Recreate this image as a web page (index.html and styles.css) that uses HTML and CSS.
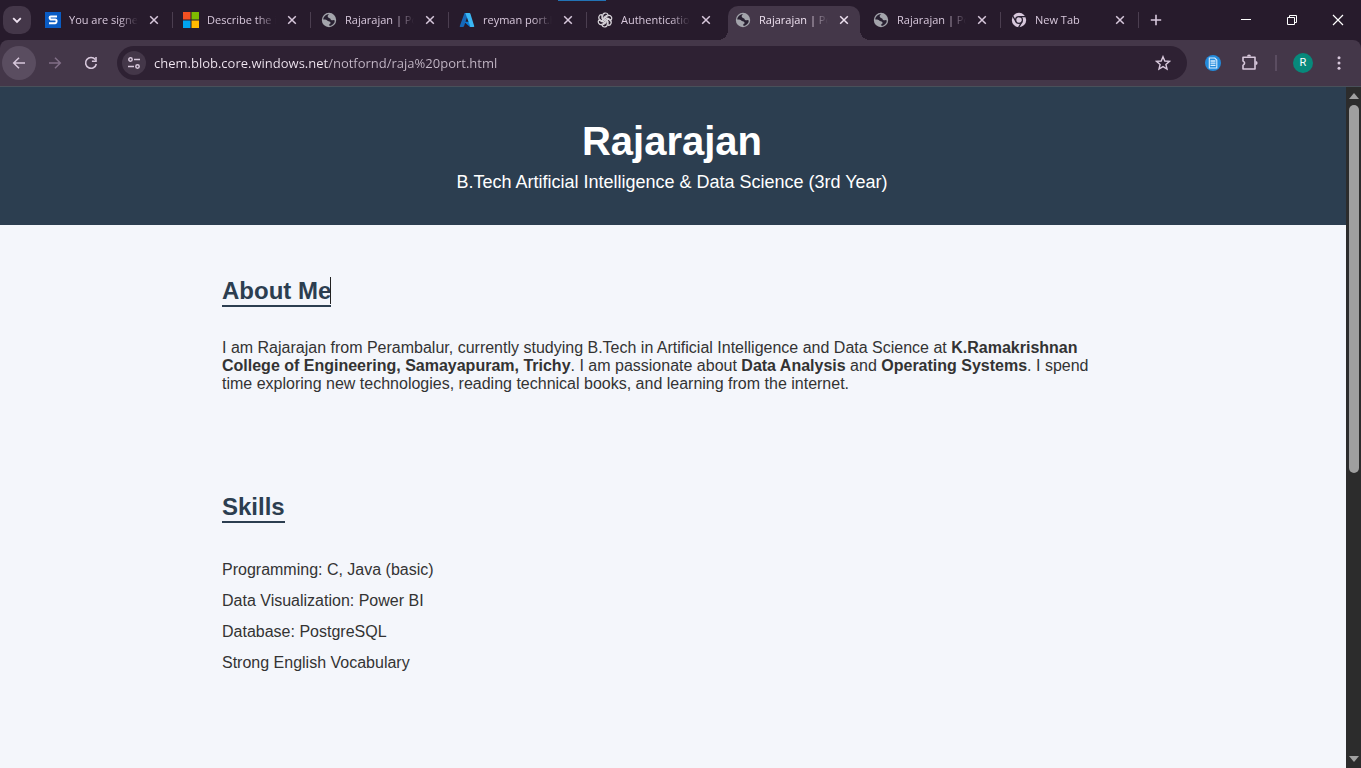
FILE: index.html
```html
<!DOCTYPE html>
<html lang="en">
<head>
<meta charset="utf-8">
<title>Rajarajan | Portfolio</title>
<link rel="stylesheet" href="styles.css">
</head>
<body>
<svg class="defs" aria-hidden="true">
  <symbol id="close" viewBox="0 0 16 16"><path d="M4.200 4.200l7.600 7.600M11.800 4.200l-7.600 7.600" fill="none" stroke="currentColor" stroke-width="1.500"/></symbol>
  <symbol id="globe" viewBox="0 0 16 16"><circle cx="8" cy="8" r="7.200" fill="#a3a4ab"/><path d="M8.300 2.300C7 3 6.200 4 7 5.200c.7 1 2.400.8 2.600 2 .2 1.400 2.200 1.200 3.200.8 1.300-.5 1.200 2.200-.3 3.800-1 1.200-2.400 2-4 2.100l-.2-2c1.400.1 1.600-1 .9-1.900-.8-1-2.200-.8-3-1.600C5.400 7.600 4 7.500 2.300 7.600 2.400 4.800 4.800 2 8.300 2.300z" fill="#282031"/><path d="M9.500 2.500l3.300 2.300-.6 1.900-1.800-.5-.7-1.700z" fill="#a3a4ab"/></symbol>
</svg>
<div class="browser">
  <header class="strip">
    <button class="search" aria-label="Search tabs"><svg width="16" height="16" viewBox="0 0 16 16"><path d="M4.200 6.200L8 10l3.800-3.800" fill="none" stroke="currentColor" stroke-width="1.800"/></svg></button>
    <nav class="tabs" aria-label="Tabs">
      <div class="tab"><button class="label"><svg class="fav" viewBox="0 0 16 16"><path fill="#0a5cc4" d="M0 0h16v16H0z"/><path d="M12 4.600H5.800Q4.600 4.600 4.600 5.800T5.800 7.600h4.400q1.400 0 1.400 1.700t-1.400 2H4" fill="none" stroke="#fff" stroke-width="2"/></svg><span>You are signed</span></button><button class="close" aria-label="Close tab"><svg><use href="#close"/></svg></button></div>
      <div class="tab"><button class="label"><svg class="fav" viewBox="0 0 16 16"><path fill="#f25022" d="M0 0h7.500v7.500H0z"/><path fill="#7fba00" d="M8.500 0H16v7.500H8.500z"/><path fill="#00a4ef" d="M0 8.500h7.500V16H0z"/><path fill="#ffb900" d="M8.500 8.500H16V16H8.500z"/></svg><span>Describe the image</span></button><button class="close" aria-label="Close tab"><svg><use href="#close"/></svg></button></div>
      <div class="tab"><button class="label"><svg class="fav"><use href="#globe"/></svg><span>Rajarajan | Portfolio</span></button><button class="close" aria-label="Close tab"><svg><use href="#close"/></svg></button></div>
      <div class="tab"><button class="label"><svg class="fav" viewBox="0 0 16 16"><path fill="#1668b8" d="M5.500 1h4L5 14.200Q4.700 15 3.800 15H1.400Q.4 15 .8 14z"/><path fill="#0b7bd6" d="M5 9.800h6.500l1.500 5-2 .2z"/><path fill="#3ab6f3" d="M6.300 1h4.200q.7 0 .9.700L15.200 14q.3 1-.7 1h-4q1 0 .6-1z"/></svg><span>reyman port.html</span></button><button class="close" aria-label="Close tab"><svg><use href="#close"/></svg></button></div>
      <div class="tab"><button class="label"><svg class="fav" viewBox="0 0 16 16"><g fill="none" stroke="#d8d4da" stroke-width="1.200"><path id="petal" d="M8 5.300L5.700 6.700V3.800C5.700 .5 10 .1 11 2.700L7.800 4.600v3.200"/><use href="#petal" transform="rotate(60 8 8)"/><use href="#petal" transform="rotate(120 8 8)"/><use href="#petal" transform="rotate(180 8 8)"/><use href="#petal" transform="rotate(240 8 8)"/><use href="#petal" transform="rotate(300 8 8)"/></g></svg><span>Authentication</span></button><button class="close" aria-label="Close tab"><svg><use href="#close"/></svg></button></div>
      <div class="tab active"><button class="label" aria-current="page"><svg class="fav"><use href="#globe"/></svg><span>Rajarajan | Portfolio</span></button><button class="close" aria-label="Close tab"><svg><use href="#close"/></svg></button></div>
      <div class="tab"><button class="label"><svg class="fav"><use href="#globe"/></svg><span>Rajarajan | Portfolio</span></button><button class="close" aria-label="Close tab"><svg><use href="#close"/></svg></button></div>
      <div class="tab"><button class="label"><svg class="fav" viewBox="0 0 16 16"><circle cx="8" cy="8" r="7.200" fill="#d8c8dc"/><g fill="none" stroke="#282031" stroke-width="1.300"><circle cx="8" cy="8" r="3.400"/><path d="M8 4.600h7M5 9.700L1.600 3.800M11 9.700l-3.500 6"/></g></svg><span>New Tab</span></button><button class="close" aria-label="Close tab"><svg><use href="#close"/></svg></button></div>
    </nav>
    <button class="plus" aria-label="New tab"><svg width="16" height="16" viewBox="0 0 16 16"><path d="M8 2.800v10.400M2.800 8h10.400" stroke="currentColor" stroke-width="1.600"/></svg></button>
    <div class="window">
      <button aria-label="Minimize"><svg width="12" height="12" viewBox="0 0 12 12"><path d="M1 5.500h10" stroke="#fff"/></svg></button>
      <button aria-label="Restore"><svg width="12" height="12" viewBox="0 0 12 12"><path d="M1.500 3.500h7v7h-7zM3.500 3.500v-2h7v7h-2" fill="none" stroke="#fff"/></svg></button>
      <button aria-label="Close"><svg width="12" height="12" viewBox="0 0 12 12"><path d="M1 1l10 10M11 1L1 11" stroke="#fff" stroke-width="1.200"/></svg></button>
    </div>
    <i class="progress"></i>
  </header>
  <div class="toolbar">
    <button class="round back" aria-label="Back"><svg width="16" height="16" viewBox="0 0 16 16"><path d="M14 8H3M8 2.700L2.700 8 8 13.300" fill="none" stroke="currentColor" stroke-width="1.500"/></svg></button>
    <button class="round forward" aria-label="Forward"><svg width="16" height="16" viewBox="0 0 16 16"><path d="M2 8h11M8 2.700L13.300 8 8 13.300" fill="none" stroke="currentColor" stroke-width="1.500"/></svg></button>
    <button class="round" aria-label="Reload"><svg width="16" height="16" viewBox="0 0 16 16"><path d="M12.300 4.600A5.400 5.400 0 1 0 13.300 9" fill="none" stroke="currentColor" stroke-width="1.600"/><path d="M13.800 2v5H8.900V5.400h3.300V2z" fill="currentColor"/></svg></button>
    <div class="omnibox">
      <button class="site" aria-label="View site information"><svg width="16" height="16" viewBox="0 0 16 16"><g fill="none" stroke="currentColor" stroke-width="1.500"><circle cx="4.500" cy="4.500" r="1.700"/><path d="M8 4.500h6M2 11.500h6"/><circle cx="11.500" cy="11.500" r="1.700"/></g></svg></button>
      <input class="url" type="text" aria-label="Address" value="chem.blob.core.windows.net/notfornd/raja%20port.html">
      <button class="star" aria-label="Bookmark this tab"><svg width="16" height="16" viewBox="0 0 16 16"><path d="M8 1.700l1.800 4.300 4.700.4-3.600 3.100 1.100 4.600L8 11.600l-4 2.500 1.100-4.600L1.500 6.400 6.200 6z" fill="none" stroke="currentColor" stroke-width="1.400"/></svg></button>
    </div>
    <div class="actions">
      <button aria-label="Document extension"><svg width="16" height="16" viewBox="0 0 16 16"><circle cx="8" cy="8" r="8" fill="#238bdc"/><path d="M4.300 3h5.500l2 2v8H4.300z" fill="none" stroke="#d9efff" stroke-width="1.100"/><path d="M5.500 6h5M5.500 8.200h5M5.500 10.400h5" stroke="#d9efff" stroke-width="1.300"/></svg></button>
      <button aria-label="Extensions"><svg width="18" height="18" viewBox="0 0 18 18"><path d="M2 3.200h12v5.600 6.200H2v-3.700q3.200-2.200 0-4.400z" fill="none" stroke="currentColor" stroke-width="1.600" stroke-linejoin="round"/><path d="M6 2.600a2 2 0 0 1 4 0zM14.600 7a2 2 0 0 1 0 4z" fill="currentColor"/></svg></button>
      <i class="divider"></i>
      <button class="avatar" aria-label="Profile">R</button>
      <button aria-label="Menu"><svg width="16" height="16" viewBox="0 0 16 16"><g fill="currentColor"><circle cx="8" cy="2.700" r="1.500"/><circle cx="8" cy="8" r="1.500"/><circle cx="8" cy="13.300" r="1.500"/></g></svg></button>
    </div>
  </div>
  <div class="viewport">
    <div class="page">
      <header class="hero">
        <h1>Rajarajan</h1>
        <p>B.Tech Artificial Intelligence &amp; Data Science (3rd Year)</p>
      </header>
      <main>
        <section>
          <h2 class="caret">About Me</h2>
          <p>I am Rajarajan from Perambalur, currently studying B.Tech in Artificial Intelligence and Data Science at <strong>K.Ramakrishnan College of Engineering, Samayapuram, Trichy</strong>. I am passionate about <strong>Data Analysis</strong> and <strong>Operating Systems</strong>. I spend time exploring new technologies, reading technical books, and learning from the internet.</p>
        </section>
        <section>
          <h2>Skills</h2>
          <ul>
            <li>Programming: C, Java (basic)</li>
            <li>Data Visualization: Power BI</li>
            <li>Database: PostgreSQL</li>
            <li>Strong English Vocabulary</li>
          </ul>
        </section>
      </main>
    </div>
    <div class="scrollbar" aria-hidden="true">
      <svg width="10" height="6" viewBox="0 0 10 6"><path d="M5 0l5 6H0z" fill="#a0a0a0"/></svg>
      <div class="track"><div class="thumb"></div></div>
      <svg width="10" height="6" viewBox="0 0 10 6"><path d="M0 0h10L5 6z" fill="#a0a0a0"/></svg>
    </div>
  </div>
</div>
</body>
</html>
```
FILE: styles.css
```css
* { box-sizing: border-box; }
body { margin: 0; font-family: "Liberation Sans", Arial, sans-serif; }
button { display: flex; align-items: center; justify-content: center; flex: none; margin: 0; padding: 0; border: 0; background: none; color: #d8c8dc; font: inherit; }
svg { flex: none; display: block; }
.defs { position: absolute; width: 0; height: 0; }
.browser { display: flex; flex-direction: column; height: 100vh; overflow: hidden; background: #271b2c; }

.strip { position: relative; display: flex; align-items: center; height: 40px; padding-left: 3px; background: #271b2c; font: 11px/20px "Open Sans", "Noto Sans", sans-serif; }
.search { width: 28px; height: 28px; border-radius: 10px; background: #443749; color: #f0e4f2; }
.tabs { display: flex; align-self: stretch; margin-left: 4px; }
.tab { position: relative; display: flex; align-items: center; width: 138px; padding: 0 11px 0 10px; }
.tab::after { content: ""; position: absolute; right: 0; top: 12px; width: 1px; height: 16px; background: #4b3e50; }
.label { gap: 8px; }
.fav { width: 16px; height: 16px; }
.label span { width: 69px; overflow: hidden; text-align: left; white-space: nowrap; -webkit-mask-image: linear-gradient(90deg, #000 50px, transparent 69px); mask-image: linear-gradient(90deg, #000 50px, transparent 69px); }
.close { width: 16px; height: 16px; margin-left: 8px; }
.close svg { width: 16px; height: 16px; }
.tab.active { z-index: 1; }
.tab.active::before { content: ""; position: absolute; inset: 6px -7px 0; background: radial-gradient(circle at 0 24px, transparent 10px, #443749 10px) left / 10px 100% no-repeat, radial-gradient(circle at 10px 24px, transparent 10px, #443749 10px) right / 10px 100% no-repeat; clip-path: polygon(0 24px, 100% 24px, 100% 100%, 0 100%); }
.tab.active::after { inset: 6px 3px 0; width: auto; height: auto; border-radius: 10px 10px 0 0; background: #443749; }
.tab.active button { position: relative; z-index: 1; color: #eee1f0; }
.tab:has(+ .active)::after { display: none; }
.plus { width: 28px; height: 28px; margin-left: 3px; }
.window { display: flex; align-self: stretch; margin-left: auto; }
.window button { width: 46px; }
.progress { position: absolute; left: 558px; top: 0; width: 48px; height: 1px; background: #2273b5; }

.toolbar { display: flex; align-items: center; height: 47px; padding: 0 14px 0 2px; border-bottom: 1px solid #49505a; border-radius: 8px 8px 0 0; background: #443749; }
.round { width: 34px; height: 34px; margin-right: 2px; border-radius: 50%; }
.back { background: #5a4d60; }
.forward { color: #816f87; }
.omnibox { display: flex; align-items: center; flex: 1; height: 34px; margin-left: 7px; padding: 0 16px 0 5px; border-radius: 17px; background: #2e2133; }
.site { width: 24px; height: 24px; border-radius: 50%; background: #443749; }
.url { flex: 1; min-width: 0; height: 24px; margin: 0 8px; padding: 0; border: 0; outline: 0; background: linear-gradient(90deg, #f2e8f3 174px, #c5b9c8 174px); -webkit-background-clip: text; background-clip: text; color: transparent; font: 13px/24px "Open Sans", "Noto Sans", sans-serif; }
.actions { display: flex; align-items: center; margin-left: 18px; }
.actions button { width: 16px; height: 20px; }
.actions button:nth-child(2) { width: 18px; margin-left: 20px; }
.divider { width: 2px; height: 16px; margin: 0 16px; background: #5b4d61; }
.actions .avatar { width: 20px; border-radius: 50%; background: #07897b; color: #fff; font: 11px/20px Roboto, sans-serif; }
.actions .avatar + button { margin-left: 18px; }

.viewport { display: flex; flex: 1; min-height: 0; }
.page { flex: 1; overflow: hidden; background: #f4f6fb; color: #333; font-size: 16px; line-height: 18px; }
.hero { padding: 32px 18px 32px 16px; background: #2c3e50; color: #fff; text-align: center; }
.hero h1 { margin: 0 0 8px; font-size: 40px; line-height: 44px; }
.hero p { margin: 0; font-size: 18px; line-height: 22px; }
main { max-width: 902px; margin: 0 auto; padding-right: 2px; }
section { padding: 52px 0 48px; }
section p { max-width: 880px; margin: 0; }
h2 { position: relative; width: fit-content; margin: 0 0 32px; border-bottom: 2px solid #2c3e50; color: #2c3e50; font-size: 24px; line-height: 28px; }
.caret::after { content: ""; position: absolute; right: 0; top: 0; width: 1px; height: 27px; background: #222; }
ul { display: grid; gap: 13px; margin: 0; padding: 6px 0; list-style: none; }
.scrollbar { display: flex; flex-direction: column; align-items: center; width: 15px; padding: 6px 0; background: #2c2c2c; }
.track { flex: 1; width: 10px; padding: 6px 0; }
.thumb { height: 57%; border-radius: 5px; background: #9f9f9f; }
```
